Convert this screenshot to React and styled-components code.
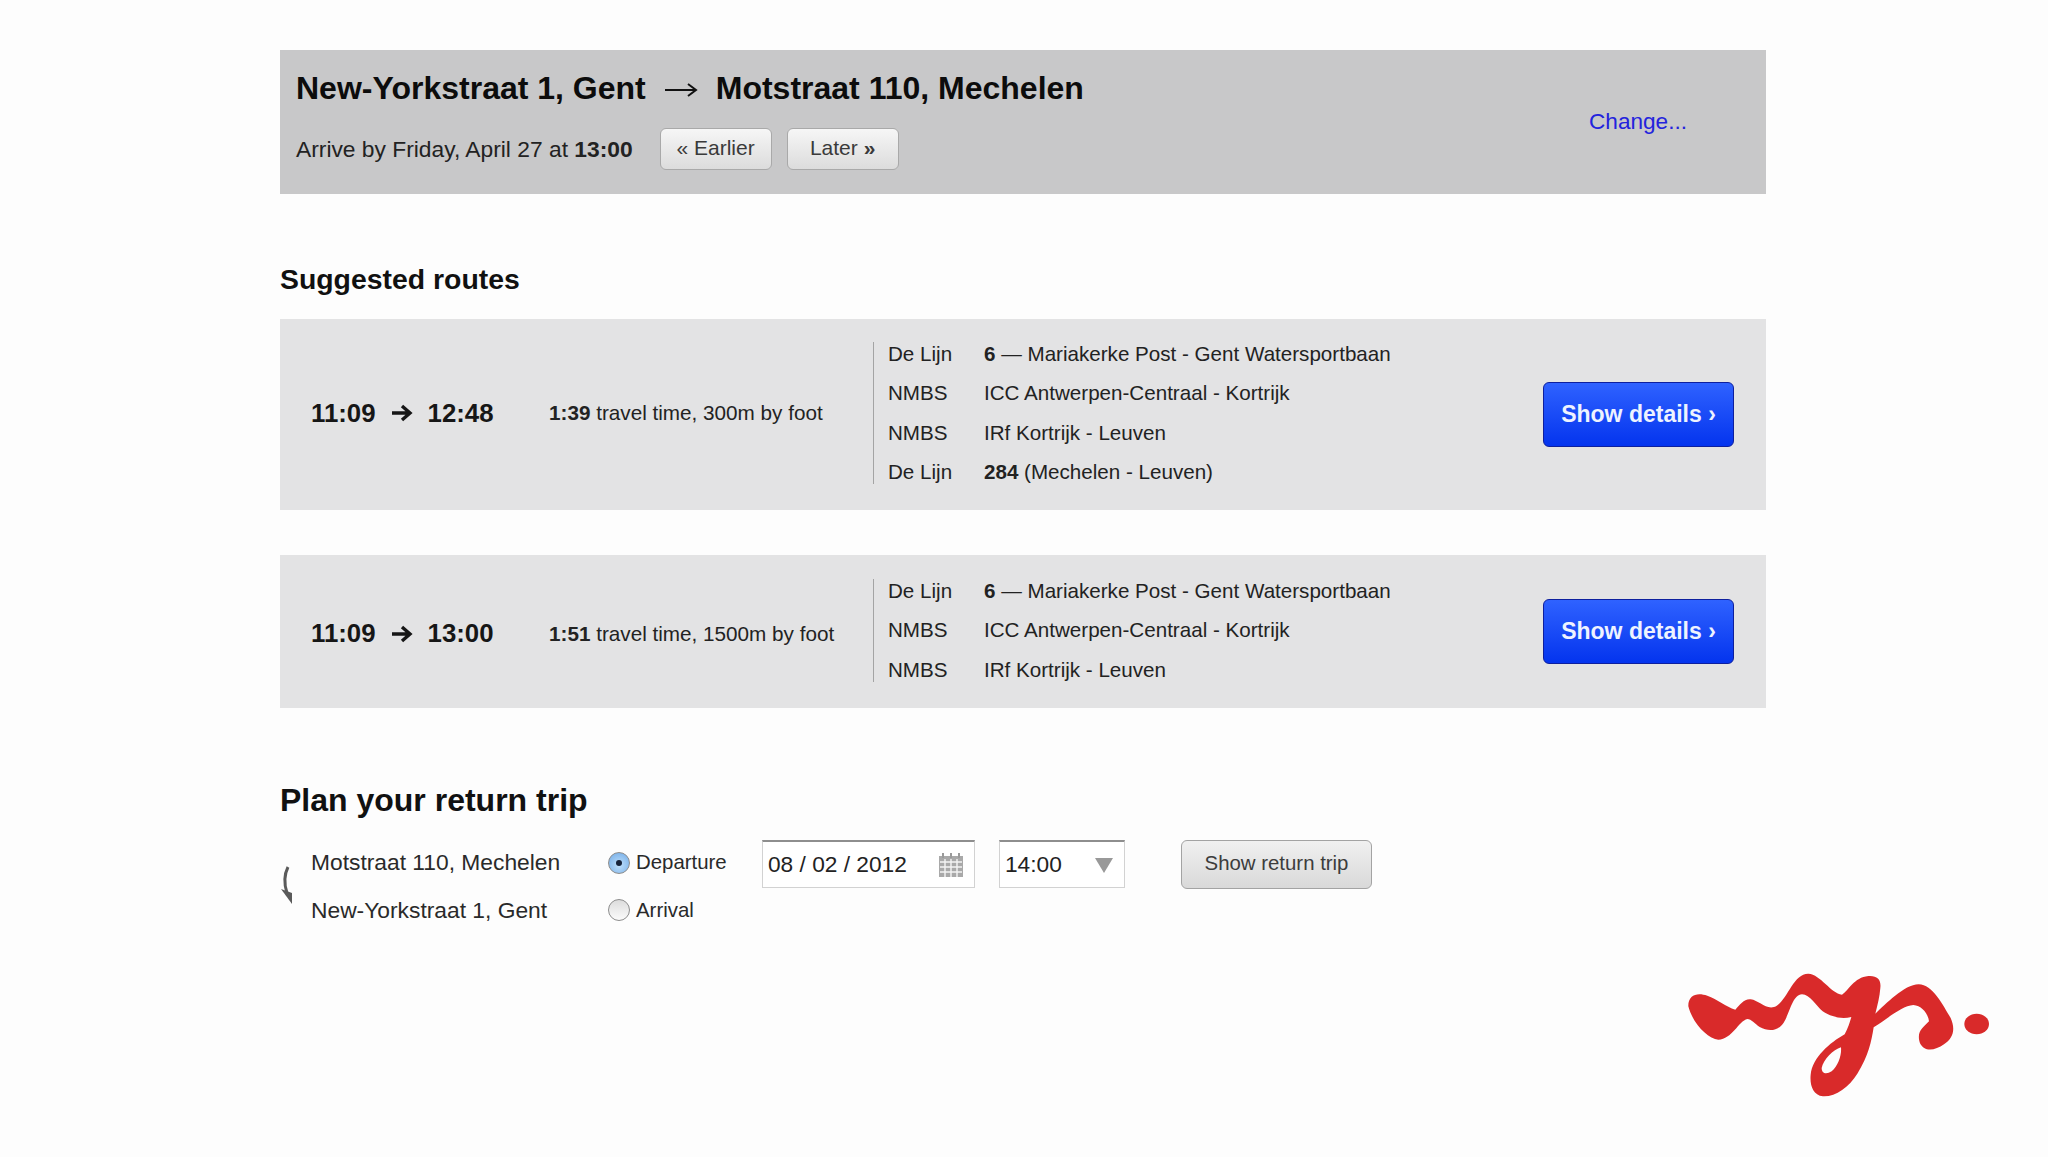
import styled, { createGlobalStyle } from 'styled-components';

const GlobalStyle = createGlobalStyle`
  html, body {
    margin: 0;
    padding: 0;
    background: #fdfdfd;
    font-family: "Liberation Sans", Arial, sans-serif;
    color: #161616;
  }
`;

const Page = styled.div`
  width: 2048px;
  height: 1157px;
  box-sizing: border-box;
  padding-top: 50px;
  overflow: hidden;
`;

const Content = styled.main`
  width: 1486px;
  margin-left: 280px;
`;

const Header = styled.header`
  height: 144px;
  box-sizing: border-box;
  padding: 0 79px 0 16px;
  background: #c8c8c9;
  display: flex;
  align-items: center;
  justify-content: space-between;
`;

const HeaderMain = styled.div`
  align-self: flex-start;
  padding-top: 16px;
`;

const Title = styled.h1`
  margin: 0;
  font-size: 32px;
  line-height: 44px;
  font-weight: 700;
  color: #0c0c0c;
  display: flex;
  align-items: center;
  gap: 18px;
`;

const TitleArrow = styled.svg`
  width: 34px;
  height: 16px;
  margin-top: 4px;
`;

const SubRow = styled.div`
  margin-top: 18px;
  display: flex;
  align-items: center;
  font-size: 22.8px;
  color: #222;
`;

const PagerGroup = styled.div`
  display: flex;
  gap: 15px;
  margin-left: 27px;
`;

const PagerButton = styled.button`
  width: 112px;
  height: 42px;
  padding: 0 0 2px;
  border: 1px solid #a9a9a9;
  border-radius: 6px;
  background: linear-gradient(#f6f6f6, #dcdcdc);
  font: 21px "Liberation Sans", Arial, sans-serif;
  color: #3a3a3a;
`;

const ChangeLink = styled.a`
  font-size: 22.6px;
  color: #2323dd;
`;

const SectionTitle = styled.h2`
  margin: 67px 0 22px;
  font-size: 28.4px;
  line-height: 36px;
  font-weight: 700;
  color: #111;
`;

const RouteCard = styled.section`
  height: ${(p) => p.$height}px;
  margin-bottom: 45px;
  box-sizing: border-box;
  padding: 0 32px 0 31px;
  background: #e3e3e4;
  display: flex;
  align-items: center;
`;

const Times = styled.div`
  width: 238px;
  margin-top: ${(p) => p.$nudge}px;
  display: flex;
  align-items: center;
  gap: 14px;
  font-size: 25.8px;
  font-weight: 700;
  color: #161616;
`;

const TravelInfo = styled.div`
  width: 324px;
  margin-top: ${(p) => p.$nudge}px;
  font-size: 20.7px;
  color: #222;
`;

const LegList = styled.div`
  flex: 1;
  margin-top: -3px;
  padding-left: 14px;
  border-left: 1px solid #a4a4a4;
  display: flex;
  flex-direction: column;
  gap: 15.5px;
`;

const Leg = styled.div`
  height: 24px;
  display: flex;
  align-items: center;
  font-size: 20.6px;
  color: #222;
`;

const Operator = styled.span`
  width: 96px;
`;

const DetailsButton = styled.button`
  width: 191px;
  height: 65px;
  padding: 0;
  border: 1px solid #0d1f9e;
  border-radius: 6px;
  background: linear-gradient(#2f62ff, #0434ee);
  font: 700 23px "Liberation Sans", Arial, sans-serif;
  color: #eef3ff;
`;

const ReturnTitle = styled.h2`
  margin: 70px 0 18px;
  font-size: 32px;
  line-height: 44px;
  font-weight: 700;
  color: #111;
`;

const ReturnForm = styled.div`
  display: flex;
  align-items: flex-start;
`;

const Swap = styled.svg`
  width: 31px;
  height: 50px;
  margin-top: 24px;
`;

const Places = styled.div`
  width: 297px;
  margin-top: -1px;
  font-size: 22.8px;
  color: #2a2a2a;
`;

const FormLine = styled.div`
  height: 47.5px;
  display: flex;
  align-items: center;
`;

const Choices = styled.div`
  width: 154px;
  margin-top: -1px;
  font-size: 20.4px;
  color: #2a2a2a;
`;

const Choice = styled.div`
  height: 47.5px;
  display: flex;
  align-items: center;
  gap: 6px;
`;

const Radio = styled.span`
  width: 20px;
  height: 20px;
  border-radius: 50%;
  border: 1px solid #8d8d8d;
  display: flex;
  align-items: center;
  justify-content: center;
  background: ${(p) => (p.$checked ? 'radial-gradient(circle at 50% 60%, #bfe0fb, #6fa9e6)' : 'linear-gradient(#dcdcdc, #fbfbfb)')};

  &::after {
    content: '';
    display: ${(p) => (p.$checked ? 'block' : 'none')};
    width: 6px;
    height: 6px;
    border-radius: 50%;
    background: #16233a;
  }
`;

const Field = styled.div`
  width: ${(p) => p.$width}px;
  height: 48px;
  margin-right: ${(p) => p.$gap}px;
  box-sizing: border-box;
  padding: 0 10px 0 5px;
  border: 1px solid #d2d2d2;
  border-top: 2px solid #8e8e8e;
  background: #fff;
  display: flex;
  align-items: center;
  justify-content: space-between;
  font-size: 22.7px;
  color: #222;
`;

const ReturnButton = styled.button`
  width: 191px;
  height: 49px;
  padding: 0 0 2px;
  border: 1px solid #a3a3a3;
  border-radius: 6px;
  background: linear-gradient(#f0f0f0, #d9d9d9);
  font: 20.4px "Liberation Sans", Arial, sans-serif;
  color: #3c3c3c;
`;

const Footer = styled.footer`
  margin-top: 14px;
  display: flex;
  justify-content: flex-end;
  padding-right: 38px;
`;

const Logo = styled.svg`
  width: 350px;
  height: 170px;
`;

const routes = [
  {
    id: 1,
    height: 191,
    nudge: -3,
    from: '11:09',
    to: '12:48',
    duration: '1:39',
    foot: '300m',
    legs: [
      ['De Lijn', '6', ' — Mariakerke Post - Gent Watersportbaan'],
      ['NMBS', '', 'ICC Antwerpen-Centraal - Kortrijk'],
      ['NMBS', '', 'IRf Kortrijk - Leuven'],
      ['De Lijn', '284', ' (Mechelen - Leuven)'],
    ],
  },
  {
    id: 2,
    height: 153,
    nudge: 4,
    from: '11:09',
    to: '13:00',
    duration: '1:51',
    foot: '1500m',
    legs: [
      ['De Lijn', '6', ' — Mariakerke Post - Gent Watersportbaan'],
      ['NMBS', '', 'ICC Antwerpen-Centraal - Kortrijk'],
      ['NMBS', '', 'IRf Kortrijk - Leuven'],
    ],
  },
];

const BoldArrow = () => (
  <svg width="24" height="20" viewBox="0 0 24 20">
    <path d="M2 10h18M12 3l8 7-8 7" fill="none" stroke="#161616" strokeWidth="3.4" />
  </svg>
);

const CalendarIcon = () => (
  <svg width="26" height="26" viewBox="0 0 26 26">
    <rect x="1" y="4" width="24" height="21" fill="#a9a9a9" />
    <path d="M5 1v5M13 1v5M21 1v5" stroke="#9a9a9a" strokeWidth="2" />
    <path d="M2 10h22M2 15h22M2 20h22M7 7v18M13 7v18M19 7v18" stroke="#f4f4f4" strokeWidth="1.4" />
  </svg>
);

const App = () => (
  <Page>
    <GlobalStyle />
    <Content>
      <Header>
        <HeaderMain>
          <Title>
            <span>New-Yorkstraat 1, Gent</span>
            <TitleArrow viewBox="0 0 34 16">
              <path d="M1 8h30M24 2l8 6-8 6" fill="none" stroke="#111" strokeWidth="2" />
            </TitleArrow>
            <span>Motstraat 110, Mechelen</span>
          </Title>
          <SubRow>
            <span>
              Arrive by Friday, April 27 at <b>13:00</b>
            </span>
            <PagerGroup>
              <PagerButton>« Earlier</PagerButton>
              <PagerButton>
                Later <b>»</b>
              </PagerButton>
            </PagerGroup>
          </SubRow>
        </HeaderMain>
        <ChangeLink>Change...</ChangeLink>
      </Header>

      <SectionTitle>Suggested routes</SectionTitle>
      {routes.map((route) => (
        <RouteCard key={route.id} $height={route.height}>
          <Times $nudge={route.nudge}>
            <span>{route.from}</span>
            <BoldArrow />
            <span>{route.to}</span>
          </Times>
          <TravelInfo $nudge={route.nudge}>
            <b>{route.duration}</b> travel time, {route.foot} by foot
          </TravelInfo>
          <LegList>
            {route.legs.map(([operator, line, name], i) => (
              <Leg key={i}>
                <Operator>{operator}</Operator>
                <span>
                  {line && <b>{line}</b>}
                  {name}
                </span>
              </Leg>
            ))}
          </LegList>
          <DetailsButton>Show details ›</DetailsButton>
        </RouteCard>
      ))}

      <ReturnTitle>Plan your return trip</ReturnTitle>
      <ReturnForm>
        <Swap viewBox="0 0 31 50">
          <path d="M8 3C4 11 4 20 7 29" fill="none" stroke="#5a5a5a" strokeWidth="3" />
          <path d="M1 25l11 4 0 11z" fill="#5a5a5a" />
        </Swap>
        <Places>
          <FormLine>Motstraat 110, Mechelen</FormLine>
          <FormLine>New-Yorkstraat 1, Gent</FormLine>
        </Places>
        <Choices>
          <Choice>
            <Radio $checked />
            Departure
          </Choice>
          <Choice>
            <Radio />
            Arrival
          </Choice>
        </Choices>
        <Field $width={213} $gap={24}>
          08 / 02 / 2012
          <CalendarIcon />
        </Field>
        <Field $width={126} $gap={56}>
          14:00
          <svg width="20" height="16" viewBox="0 0 20 16">
            <path d="M1 1h18l-9 15z" fill="#999" />
          </svg>
        </Field>
        <ReturnButton>Show return trip</ReturnButton>
      </ReturnForm>
    </Content>
    <Footer>
      <Logo viewBox="0 0 1050 510">
        <path
          fill="#d92a2a"
          fillRule="evenodd"
          d="M85 175C84 140 112 132 142 143C172 154 198 176 226 185C240 170 252 152 272 154C296 157 316 184 342 177C380 165 398 76 445 77C482 79 512 136 546 140C566 128 582 88 625 84C652 82 664 95 661 120C659 146 653 170 646 197C678 168 732 110 776 109C818 110 848 170 872 210C888 246 878 272 852 289C826 307 794 314 780 286C768 250 790 238 807 220C804 196 785 173 760 171C726 173 680 214 641 238C634 282 626 322 592 377C566 418 526 447 489 445C458 442 449 410 452 380C457 329 510 284 554 259C564 240 569 225 574 207C545 214 513 207 488 190C468 174 450 139 426 139C397 141 391 192 371 224C351 252 324 250 299 237C284 227 274 213 262 213C236 219 216 274 175 275C143 272 98 226 85 175ZM543 298C520 305 490 335 485 360C485 378 500 380 515 370C535 352 545 322 543 298Z"
        />
        <ellipse cx="950" cy="228" rx="37" ry="31" fill="#d92a2a" />
      </Logo>
    </Footer>
  </Page>
);

export default App;
